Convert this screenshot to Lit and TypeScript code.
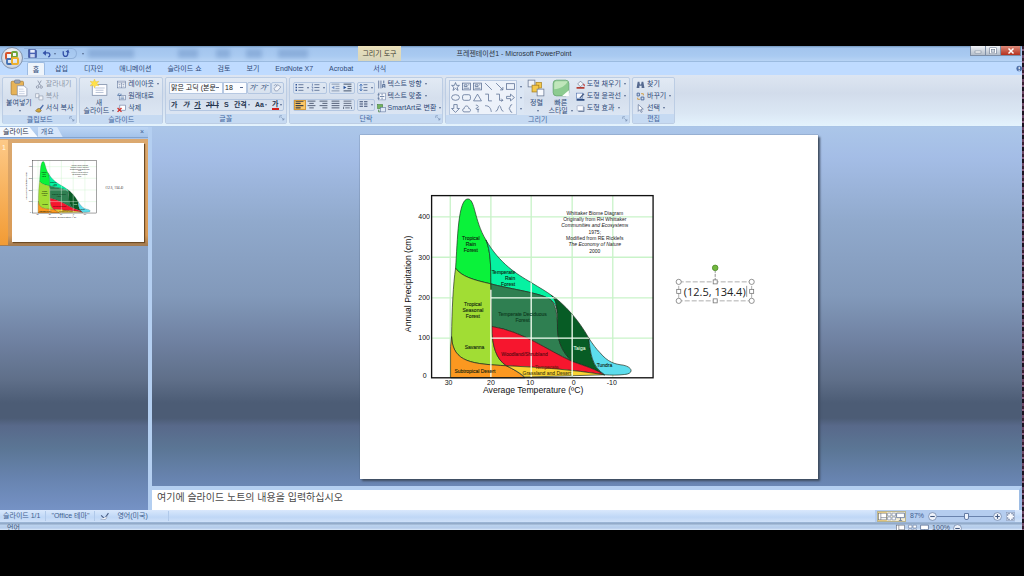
import { LitElement, html, svg, css } from "lit";
import { customElement, property } from "lit/decorators.js";
import { classMap } from "lit/directives/class-map.js";

const icons: Record<string, unknown> = {
  save: svg`<path d="M1 1h12l2 2v12H1z" fill="#4a62b4" stroke="#2b3f86"/><rect x="4" y="1.500" width="8" height="5" fill="#e8eefc"/><rect x="4" y="9" width="8" height="6" fill="#cdd8f2"/>`,
  undo: svg`<path d="M3 7h7a3.500 3.500 0 0 1 1 7" fill="none" stroke="#3552a8" stroke-width="2.400"/><path d="M1 7l6-5v10z" fill="#3552a8"/>`,
  redo: svg`<path d="M4 4v5a4 4 0 0 0 8 0V4" fill="none" stroke="#3552a8" stroke-width="2.400"/><path d="M8 5l5-4 2 6z" fill="#3552a8"/>`,
  paste: svg`<rect x="1" y="2" width="11" height="12" rx="1" fill="#e7b357" stroke="#a5762b" stroke-width=".6"/><rect x="4" y=".8" width="5" height="3" rx="1" fill="#9aa3b3" stroke="#6b7484" stroke-width=".5"/><path d="M6.500 6h6l2.500 2.500V15H6.500z" fill="#fbfcff" stroke="#7d8aa5" stroke-width=".6"/><path d="M8 9h4M8 11h5M8 13h5" stroke="#b5c0d6" stroke-width=".6"/>`,
  cut: svg`<path d="M5 1l5 9M11 1l-5 9" stroke="#8c96a8" stroke-width="1.500"/><circle cx="4.500" cy="12.500" r="2.200" fill="none" stroke="#8c96a8" stroke-width="1.500"/><circle cx="11" cy="12.500" r="2.200" fill="none" stroke="#8c96a8" stroke-width="1.500"/>`,
  copy: svg`<path d="M1 3h6v7H1zM7 7h7v7H7z" fill="#f0f2f7" stroke="#97a1b3" stroke-width="1.200"/>`,
  brush: svg`<path d="M8 8l6-7 1.500 1.500L10 10z" fill="#4d6dab"/><path d="M1 12c2-1 3-5 7-4l3 3c0 4-6 5-10 1z" fill="#d3a73e" stroke="#6f5520"/>`,
  newslide: svg`<rect x="2" y="5" width="13" height="9.500" fill="#fdfdff" stroke="#7e8ea9" stroke-width=".7"/><path d="M4 8h9M5 10h7M5 12h7" stroke="#a9b6cd" stroke-width=".7"/><path d="M4 0l1 2.500L8 2 6.200 4 8 6 5 5.800 4 8 3 5.800 0 6l1.800-2L0 2l3 .500z" fill="#ffe14a" stroke="#e0b52a" stroke-width=".3"/>`,
  layout: svg`<rect x="1" y="2" width="14" height="12" fill="#f7f9fd" stroke="#5b7097"/><path d="M1 5h14M8 5v9M3 8h3M3 11h3M10 8h3M10 11h3" stroke="#5b7097"/>`,
  reset: svg`<rect x="4" y="6" width="11" height="8" fill="#fff" stroke="#5b7097"/><path d="M1 6h6V3M1 6l3-4M6 9h7M6 12h7" fill="none" stroke="#41689f" stroke-width="1.300"/>`,
  del: svg`<rect x="5" y="2" width="10" height="9" fill="#fff" stroke="#5b7097"/><path d="M1 7l7 7M8 7l-7 7" stroke="#d0302b" stroke-width="2.400"/>`,
  eraser: svg`<path d="M2 10l6-7 6 4-6 7H4z" fill="#f1f4fa" stroke="#65789b"/><path d="M2 5c2-4 5-2 5 1" fill="none" stroke="#65789b"/>`,
  bullets: svg`<path d="M6 3h9M6 8h9M6 13h9" stroke="#4b6188" stroke-width="1.400"/><path d="M1 3h2.500M1 8h2.500M1 13h2.500" stroke="#2d4f91" stroke-width="2.500"/>`,
  numbers: svg`<path d="M6 3h9M6 8h9M6 13h9" stroke="#4b6188" stroke-width="1.400"/><path d="M2.500 1v4M1 7h2v3M1 12h2v3" stroke="#2d4f91" fill="none"/>`,
  outdent: svg`<path d="M1 2h14M8 6h7M8 10h7M1 14h14" stroke="#7384a2" stroke-width="1.400"/><path d="M6 5v6L1 8z" fill="#6d8dc4"/>`,
  indent: svg`<path d="M1 2h14M8 6h7M8 10h7M1 14h14" stroke="#33445f" stroke-width="1.600"/><path d="M1 5v6l5-3z" fill="#24509c"/>`,
  spacing: svg`<path d="M8 3h7M8 8h7M8 13h7" stroke="#4b6188" stroke-width="1.400"/><path d="M3.500 2v12M1 5l2.500-3L6 5M1 11l2.500 3L6 11" fill="none" stroke="#2d62b1" stroke-width="1.300"/>`,
  left: svg`<path d="M1 2h14M1 6h9M1 10h14M1 14h9" stroke="#3d4048" stroke-width="1.800"/>`,
  center: svg`<path d="M1 2h14M4 6h8M1 10h14M4 14h8" stroke="#47536b" stroke-width="1.600"/>`,
  right: svg`<path d="M1 2h14M6 6h9M1 10h14M6 14h9" stroke="#47536b" stroke-width="1.600"/>`,
  justify: svg`<path d="M1 2h14M1 6h14M1 10h14M1 14h14" stroke="#47536b" stroke-width="1.600"/>`,
  distribute: svg`<path d="M1 2h14M1 6h14M1 10h14M4 14h8M1 12v4M15 12v4" stroke="#47536b" stroke-width="1.400"/>`,
  columns: svg`<path d="M1 3h6M1 7h6M1 11h6M9 3h6M9 7h6M9 11h6" stroke="#3c4e72" stroke-width="2"/>`,
  textdir: svg`<path d="M3 1v14M7 1v14" stroke="#5b7097" stroke-width="1.500"/><path d="M10 14V8h4v6M10 11h4M12 6V1" fill="none" stroke="#33507f" stroke-width="1.300"/>`,
  textalign: svg`<rect x="3" y="2" width="12" height="12" fill="#f6f8fd" stroke="#6a7fa5"/><path d="M5 8h8M9 3v3M9 10v3M1 5h4M1 11h4" stroke="#33507f" stroke-width="1.200"/>`,
  smartart: svg`<rect x="1" y="1" width="9" height="7" fill="#73b35e" stroke="#3f7a36"/><rect x="6" y="6" width="9" height="8" fill="#dfe9f8" stroke="#5b7097"/><path d="M3 10v4h2" fill="none" stroke="#3f7a36" stroke-width="1.500"/>`,
  arrange: svg`<rect x="1" y="1" width="6" height="6" fill="#eef2f9" stroke="#6d7c98" stroke-width=".7"/><rect x="8" y="3" width="5" height="5" fill="#f4c84b" stroke="#a67f23" stroke-width=".6"/><rect x="4.500" y="5.500" width="6" height="6" fill="#f4c84b" stroke="#a67f23" stroke-width=".7"/><rect x="9" y="9" width="6" height="6" fill="#f7f9fd" stroke="#6d7c98" stroke-width=".7"/>`,
  quick: svg`<rect x="1" y="1" width="14" height="14" rx="3" fill="#8ccb90" stroke="#5d9d68" stroke-width=".6"/><path d="M2 9C7 9 12 6 14 2H4a2 2 0 0 0-2 2z" fill="#c0e6bb"/><path d="M9 15l6-5v5z" fill="#fff"/>`,
  fill: svg`<path d="M3 7l5-5 5 5-5 5z" fill="#f3f5fa" stroke="#55637f"/><path d="M13 7c2 1 2 3 1 4" stroke="#c02d27" fill="none" stroke-width="2"/><rect x="1" y="12.500" width="14" height="3" fill="#b3382e"/>`,
  outline: svg`<rect x="1" y="2" width="11" height="9" fill="#f6f8fd" stroke="#4569a9"/><path d="M6 10l7-8 2 2-7 7z" fill="#4a5e85"/><rect x="1" y="12.500" width="14" height="3" fill="#28477e"/>`,
  effects: svg`<rect x="4" y="5" width="11" height="9" rx="1" fill="#7284a4"/><rect x="2" y="3" width="11" height="9" rx="1" fill="#fafbff" stroke="#8b9ab5"/>`,
  find: svg`<path d="M1 14l2-11h3l1 5h2l1-5h3l2 11h-5v-4H6v4z" fill="#55698f"/>`,
  replace: svg`<path d="M2 2h4v5H2zM9 9h5v5H9z" fill="none" stroke="#3c5c93" stroke-width="1.500"/><path d="M9 3h4v3M3 10v3h4" fill="none" stroke="#d0932f" stroke-width="1.500"/>`,
  select: svg`<path d="M4 1v12l3-3 2 5 2-1-2-5h4z" fill="#fff" stroke="#5b6f94" stroke-width="1.200"/>`,
  star: svg`<path d="M8 1l2 5h5l-4 3.500L12.500 15 8 11.500 3.500 15 5 9.500 1 6h5z"/>`,
  pic: svg`<rect x="1" y="2" width="14" height="12"/><path d="M4 5h5v3H4zM3 11h10M11 5h2"/>`,
  line: svg`<path d="M2 2l12 12"/>`,
  arrow: svg`<path d="M2 2l12 12M14 9v5H9"/>`,
  rect: svg`<rect x="1" y="3" width="14" height="10"/>`,
  oval: svg`<ellipse cx="8" cy="8" rx="7" ry="5"/>`,
  round: svg`<rect x="1" y="3" width="14" height="10" rx="3"/>`,
  tri: svg`<path d="M8 2l7 12H1z"/>`,
  elbow: svg`<path d="M2 2h6v12h6"/>`,
  elbow2: svg`<path d="M2 2h6v11h6M11 10l3 3-3 2"/>`,
  block: svg`<path d="M1 6h7V2l7 6-7 6v-4H1z"/>`,
  down: svg`<path d="M5 1h6v7h4l-7 7-7-7h4z"/>`,
  cloud: svg`<path d="M3 14C0 12 1 8 4 8c0-6 8-6 8 0 4 0 4 5 1 6z"/>`,
  bolt: svg`<path d="M5 2c5 0 6 4 2 5s0 4 4 2M9 9v6"/>`,
  curve: svg`<path d="M2 3c8 0 10 5 11 11"/>`,
  peak: svg`<path d="M1 13C6 13 5 3 8 3s2 10 7 10"/>`,
  brace: svg`<path d="M11 1C6 1 9 7 5 8c4 1 1 7 6 7"/>`,
  launch: svg`<path d="M2 8V2h6M6 6l7 7M13 8v5H8" fill="none" stroke="#6f86ab" stroke-width="1.500"/>`,
  proof: svg`<path d="M2 6l6 6 7-10" fill="none" stroke="#4a5f87" stroke-width="2"/><path d="M1 13h9l3-5" fill="#fff" stroke="#7d8ba5"/>`,
  normal: svg`<rect x="1" y="2" width="14" height="12" fill="#fff" stroke="#5b6270"/><path d="M5 2v12M5 10h10" stroke="#5b6270"/>`,
  sorter: svg`<path d="M1 2h6v5H1zM9 2h6v5H9zM1 9h6v5H1zM9 9h6v5H9z" fill="#fff" stroke="#64789c"/>`,
  show: svg`<path d="M1 2h14v8H1z" fill="#fff" stroke="#5b6f94" stroke-width="1.400"/><path d="M8 10v5M5 15h6" stroke="#5b6f94" stroke-width="1.400"/>`,
  minus: svg`<circle cx="8" cy="8" r="7" fill="#f1f5fc" stroke="#6e83a8" stroke-width="1.400"/><path d="M4 8h8" stroke="#42587f" stroke-width="2"/>`,
  plus: svg`<circle cx="8" cy="8" r="7" fill="#f1f5fc" stroke="#6e83a8" stroke-width="1.400"/><path d="M4 8h8M8 4v8" stroke="#42587f" stroke-width="2"/>`,
  fit: svg`<rect x="1" y="1" width="14" height="14" fill="#f7f9fd" stroke="#8394b3"/><path d="M3 7V3h4M13 9v4H9M9 3h4v4M7 13H3V9" fill="none" stroke="#5a7099" stroke-width="1.400"/>`,
};

const icon = (name: string, cls = "ico") =>
  html`<svg class=${cls} viewBox="0 0 16 16" aria-hidden="true">${icons[name]}</svg>`;

@customElement("biome-slide")
class BiomeSlide extends LitElement {
  @property({ type: Boolean }) editing = false;

  static styles = css`
    :host { display: block; background: #fff; }
    .art { display: block; width: 100%; height: auto; font-family: "Liberation Sans", Arial, sans-serif; }
    .box { font-family: "Open Sans", sans-serif; }
  `;

  label(x: number, y: number, lines: string[], fill = "#10240f", anchor = "middle") {
    return svg`<text font-size="15" fill=${fill} stroke=${fill} stroke-width=".3" text-anchor=${anchor}>${lines.map(
      (t, i) => svg`<tspan x=${x} y=${y + i * 18}>${t}</tspan>`)}</text>`;
  }

  render() {
    const notes = ["Whittaker Biome Diagram", "Originally from RH Whittaker", "Communities and Ecosystems",
      "1975;", "Modified from RE Ricklefs", "The Economy of Nature", "2000"];
    return html`<svg class="art" viewBox="0 0 458 344" role="img" aria-label="Whittaker Biome Diagram">
      <defs><clipPath id="biomes"><path d="M182 594V500C186 400 190 300 197 265C203 180 204 57 234 57C256 57 252 120 300 200C335 252 380 282 424 308C450 324 470 335 485 347C520 368 565 420 594 470C610 495 620 508 630 518C655 548 675 553 700 556C730 562 732 582 705 584C680 587 640 585 600 588L405 592z"/></clipPath></defs>
      <g transform="translate(30 45) scale(.33333)">
        <path d="M181 47V594M303 47V594M424 47V594M547 47V594M669 47V594M125 111H790M125 232H790M125 354H790M125 475H790" stroke="#c9f3c9" stroke-width="4"/>
        <g stroke="#1b2a1b" stroke-width="2" stroke-linejoin="round">
          <path fill="#0af23a" d="M197 265C203 180 204 57 234 57C256 57 252 120 288 180C302 210 303 260 303 312C250 300 215 290 197 265z"/>
          <path fill="#a1dd34" d="M197 265C215 290 250 300 303 312L306 440C306 500 320 540 350 558C250 552 188 550 185 470C186 390 190 310 197 265z"/>
          <path fill="#fb9820" d="M185 470C188 550 250 552 350 558C375 570 392 582 405 594H182V500z"/>
          <path fill="#06f2a2" d="M288 180C330 252 380 282 424 308C450 324 470 335 487 348C500 365 503 385 503 400C500 370 485 360 470 353C440 338 350 325 303 312C303 260 302 210 288 180z"/>
          <path fill="#2f7f51" d="M303 312C350 325 440 338 470 353C495 362 503 390 503 450C505 490 520 520 547 545C470 510 400 455 306 440z"/>
          <path fill="#075c25" d="M485 347C520 368 568 422 597 475C602 520 605 560 645 585C600 560 565 552 547 545C520 520 505 490 503 450C503 400 505 365 485 347z"/>
          <path fill="#f6162e" d="M306 440C400 455 470 510 547 545C590 560 620 570 645 585C550 570 450 562 350 558C320 540 306 500 306 440z"/>
          <path fill="#fad334" d="M350 558C450 562 550 570 645 585L405 592C392 580 370 568 350 558z"/>
          <path fill="#5cdded" d="M597 475C610 495 620 508 630 518C655 548 675 553 700 556C730 562 732 582 705 584C680 587 665 586 645 585C605 560 602 520 597 475z"/>
        </g>
        <path clip-path="url(#biomes)" d="M303 330V594M424 300V594M547 400V594M303 354H600M303 475H640" stroke="#f2fff2" stroke-width="4"/>
        <rect x="125" y="47" width="665" height="547" fill="none" stroke="#111" stroke-width="4"/>
        ${this.label(243, 181, ["Tropical", "Rain", "Forest"])}
        ${this.label(249, 379, ["Tropical", "Seasonal", "Forest"])}
        ${this.label(254, 508, ["Savanna"])}
        ${this.label(255, 579, ["Subtropical Desert"])}
        ${this.label(376, 281, ["Temperate", "Rain", "Forest"], "#10240f", "end")}
        ${this.label(398, 408, ["Temperate Deciduous", "Forest"], "#0d3a1e")}
        ${this.label(404, 528, ["Woodland/Shrubland"], "#5a0a12")}
        ${this.label(471, 568, ["Temperate"], "#7a1c10")}
        ${this.label(471, 586, ["Grassland and Desert"], "#4d4010")}
        ${this.label(569, 510, ["Taiga"], "#d6efd9")}
        ${this.label(644, 562, ["Tundra"])}
        <g font-size="15" text-anchor="middle" fill="#222">${notes.map((t, i) =>
          svg`<text x="615" y=${104 + i * 19} font-style=${i === 2 || i === 5 ? "italic" : "normal"}>${t}</text>`)}</g>
        <g font-size="21" fill="#111" text-anchor="end">
          <text x="120" y="117">400</text><text x="120" y="239">300</text><text x="120" y="361">200</text><text x="120" y="480">100</text><text x="110" y="595">0</text>
        </g>
        <g font-size="21" fill="#111" text-anchor="middle">
          <text x="176" y="616">30</text><text x="303" y="616">20</text><text x="421" y="616">10</text><text x="552" y="616">0</text><text x="666" y="616">-10</text>
        </g>
        <text x="430" y="641" font-size="26" text-anchor="middle" fill="#111">Average Temperature (ºC)</text>
        <text transform="translate(62 312) rotate(-90)" font-size="26" text-anchor="middle" fill="#111">Annual Precipitation (cm)</text>
      </g>
      <text class="box" x="324" y="161" font-size="11" fill="#222">(12.5, 134.4)</text>
      ${this.editing ? svg`
        <g fill="#fff" stroke="#777" stroke-width=".8">
          <rect x="319" y="147" width="73" height="19" fill="none" stroke="#999" stroke-dasharray="5 2"/>
          <path d="M355.500 146v-10" stroke-dasharray="3 1"/>
          <circle cx="355.500" cy="133" r="2.800" fill="#72b83e" stroke="#4c8a2a"/>
          <circle cx="319" cy="147" r="2.600"/><circle cx="392" cy="147" r="2.600"/><circle cx="319" cy="166" r="2.600"/><circle cx="392" cy="166" r="2.600"/>
          <rect x="353.500" y="145" width="4" height="4"/><rect x="353.500" y="164" width="4" height="4"/><rect x="317" y="154.500" width="4" height="4"/><rect x="390" y="154.500" width="4" height="4"/>
        </g>
        <path d="M387 151v11" stroke="#555" stroke-width=".6"/>` : ""}
    </svg>`;
  }
}

@customElement("app-root")
class AppRoot extends LitElement {
  static styles = css`
    :host {
      display: grid; min-height: 100vh; box-sizing: border-box; padding-block: 46px; background: #000;
      font: 7px/10px "Liberation Sans", "Noto Sans CJK KR", sans-serif; color: #2f4a78;
    }
    button, select, input, textarea { font: inherit; color: inherit; margin: 0; padding: 0; border: 0; background: none; box-sizing: border-box; }
    button { display: inline-flex; align-items: center; justify-content: center; white-space: nowrap; }
    .ico { width: 9px; height: 9px; flex: none; display: block; }
    .big { width: 18px; height: 18px; flex: none; }
    .caret::after { content: ""; display: inline-block; border: 1px solid transparent; border-top: 2px solid #55698f; border-bottom: 0; margin-left: 3px; vertical-align: middle; }
    .window {
      display: grid; grid-template-rows: 16px 13px 52px 1fr 12px 8px; padding-right: 2px; min-width: 0; position: relative;
      background: repeating-linear-gradient(#3a2033 0 3px, #8a6080 3px 5px, #1c1220 5px 9px, #6d4766 9px 12px);
    }
    .titlebar { display: grid; grid-template-columns: 1fr auto 1fr; background: linear-gradient(#6f93bb, #a3c5ee 2px, #a9caf1 10px, #b8d4f5); border-bottom: 1px solid #9bbbe0; box-sizing: border-box; }
    .lead { display: flex; padding-left: 24px; }
    .qat { display: flex; align-items: center; gap: 5px; padding: 0 6px 0 4px; margin-block: 2px; border: 1px solid #8fb0da; border-left: 0; border-radius: 0 7px 7px 0; }
    .more { display: flex; align-items: center; padding-left: 2px; }
    .glass { flex: 1; margin: 3px 14px 3px 4px; filter: blur(2px); opacity: .35;
      background: linear-gradient(90deg, #587fb5 0 46px, transparent 46px 90px, #587fb5 90px 110px, transparent 110px 128px, #587fb5 128px 142px, transparent 142px 158px, #587fb5 158px 174px, transparent 174px 190px, #587fb5 190px 220px, transparent 220px); }
    .context { padding: 3px 4px 0; margin-right: 50px; background: linear-gradient(#e9dfb9, #d8d6bd); color: #3b3b33; box-sizing: border-box; }
    .title { font: inherit; margin: 0; padding: 3px 0 0 6px; color: #2b3440; }
    .caption { justify-self: end; display: flex; height: 10px; margin-right: 1px; border: 1px solid #7d8ea6; border-top: 0; box-sizing: border-box; }
    .caption button { width: 15px; background: linear-gradient(#eef1f5, #b3bdca); border-right: 1px solid #7d8ea6; color: #fff; }
    .caption .close { width: 19px; border: 0; background: linear-gradient(#dc8b7b, #b5301d); font-weight: bold; }
    .caption svg { width: 8px; height: 8px; }
    .office { position: absolute; left: 1px; top: 1px; width: 22px; height: 22px; border-radius: 50%; border: 1px solid #8494ad; background: radial-gradient(circle at 50% 35%, #fff, #cdd6e3 70%, #a5b2c6); }
    .office svg { width: 16px; height: 16px; }
    .tabs { display: flex; background: #bfdbff; padding-left: 27px; }
    .tabs button { padding: 0 8px; line-height: 13px; }
    .tabs .home { width: 18px; padding: 0; margin-right: 2px; background: #eef4fb; border: 1px solid #9dbbe2; border-bottom: 0; border-radius: 2px 2px 0 0; }
    .tabs .tool { margin-left: 4px; }
    .tabs .help { margin-left: auto; padding: 0; }
    .ribbon { display: flex; gap: 2px; padding: 2px; box-sizing: border-box; background: linear-gradient(#dde5f1, #d2dceb 35%, #dbe7f4 75%, #e4f3fd); border-bottom: 1px solid #a9c4e6; }
    .group { display: grid; grid-template-rows: 1fr 9px; border: 1px solid #bccde4; border-radius: 2px; box-sizing: border-box; background: linear-gradient(#e2eaf4, #d5dfed 45%, #dfe9f6); }
    .group h2 { position: relative; margin: 0; font: inherit; line-height: 9px; text-align: center; background: #c6daf2; color: #4467a0; }
    .launch { position: absolute; right: 1px; top: 1px; }
    .launch svg { width: 6px; height: 6px; }
    .body { display: flex; padding: 0 3px; gap: 3px; }
    .tall { flex-direction: column; justify-content: flex-start; line-height: 8px; padding-top: 1px; gap: 2px; }
    .stack { display: grid; grid-template-rows: repeat(3, 12px); justify-items: start; }
    .stack button { gap: 2px; }
    .off { color: #8d97a8; }
    .rows { display: grid; grid-template-rows: 13px 13px; row-gap: 4px; padding-top: 3px; align-content: start; }
    .row { display: flex; align-items: center; }
    .row > button { height: 13px; }
    .combo { appearance: none; height: 12px; background: #fafcff; border: 1px solid #b6c8e2; padding-left: 1px; line-height: 10px; color: #222; border-radius: 0;
      background-image: linear-gradient(#55698f, #55698f); background-size: 3px 1px; background-repeat: no-repeat; background-position: right 3px center; }
    .face { width: 54px; } .size { width: 24px; }
    .seg { display: flex; border: 1px solid #b3c6e1; border-radius: 2px; height: 12px; box-sizing: border-box; }
    .seg button { padding: 0 1px; }
    .fonts .body { padding-right: 2px; }
    .fmt { display: flex; justify-content: space-between; flex: 1; color: #27364f; font-weight: bold; }
    .fmt .caret::after { margin-left: 1px; }
    .i { font-style: italic; } .u { text-decoration: underline; } .s { text-decoration: line-through; }
    .ink { border-bottom: 2px solid #d5201b; line-height: 8px; }
    .para .seg button { width: 12px; padding: 0; }
    .para .seg .wide { width: 16px; }
    .para .row { gap: 2px; }
    .para .body { gap: 2px; padding-right: 1px; }
    .para .seg .on { background: #fbc767; outline: 1px solid #d39a3c; outline-offset: -1px; }
    .shapes { display: grid; grid-template-columns: repeat(6, 11px); grid-template-rows: repeat(3, 11px); background: #edf2fa; border: 1px solid #b9cae2; margin-top: 2px; height: 33px; }
    .shapes svg { width: 9px; height: 9px; fill: none; stroke: #5d7195; stroke-width: 1.400; }
    .gallery { display: flex; }
    .scroll { display: grid; grid-template-rows: repeat(3, 11px); margin-top: 3px; width: 7px; background: #dbe6f4; }
    .scroll .caret::after { margin-left: 0; }
    .work { display: grid; grid-template-columns: 148px 1fr; min-height: 0;
      background: linear-gradient(#abc6e9, #a4bde6 8%, #90a9cc 25%, #8299ba 44%, #6f81a1 56%, #5f6f89 66%, #4c5c75 72% 76%, #58698a 78%, #5b7695 84%, #6884b0 92%, #7592c5); }
    .pane-tabs { display: flex; height: 11px; background: linear-gradient(#bcd5f4, #a4c3ea); border-bottom: 1px solid #83a4cf; box-sizing: border-box; }
    .pane-tabs button { padding: 0 9px 0 3px; clip-path: polygon(0 0, 78% 0, 100% 100%, 0 100%); background: #d6e6fa; color: #40618f; }
    .pane-tabs .front { background: #f6faff; color: #1c2c45; }
    .pane-tabs .x { margin-left: auto; clip-path: none; background: none; padding: 0 4px; }
    .picked { display: grid; grid-template-columns: 8px 1fr; gap: 4px; margin-top: 1px; padding: 4px 4px 4px 0; background: linear-gradient(#dba970, #d99a55 90%, #a07a52); }
    .num { background: linear-gradient(#fdc987, #f29b34); color: #fffbe8; text-align: center; margin-block: -3px; padding-top: 3px; }
    .thumb { box-shadow: 1px 1px 1px #6b4a25; }
    .main { display: grid; grid-template-rows: 1fr auto; border-left: 4px solid #b4cff1; min-width: 0; }
    .stage { display: flex; justify-content: center; align-items: flex-start; padding: 8px 0 6px; }
    .slide { width: 52.6%; flex: none; margin-left: 4px; box-shadow: 2px 2px 2px #3f4d60, 0 0 1px #44526a; }
    .notes { display: block; width: 100%; height: 24px; resize: none; overflow: hidden; border-top: 4px solid #b4cff1; border-right: 3px solid #9dbce4; background: #fff; font-size: 10px; line-height: 15px; padding-left: 5px; outline: 0; }
    .notes::placeholder { color: #4a4a4a; opacity: 1; }
    .status { display: flex; align-items: center; padding: 0 7px 0 3px; background: linear-gradient(#d9e8fc, #bfd7f6 60%, #cfe1f9); color: #41608f; }
    .status > span { padding-right: 5px; margin-right: 5px; border-right: 1px solid #b0c9ea; }
    .status > .lang { padding-inline: 8px 20px; }
    .zoom { margin-left: auto; display: flex; align-items: center; align-self: stretch; gap: 4px; background: #b5cdef; padding-left: 2px; }
    .views { display: flex; background: #f4eed6; border: 1px solid #b9b48f; }
    .views button { width: 9px; } .views .on { background: #fbd987; }
    .slider { display: flex; align-items: center; }
    .slider input { appearance: none; width: 56px; height: 9px; background: linear-gradient(#6a83ad, #6a83ad) center / 100% 1px no-repeat; }
    .slider input::-webkit-slider-thumb { appearance: none; width: 5px; height: 7px; background: #eff4fc; border: 1px solid #667da5; border-radius: 0 0 2px 2px; }
    .behind { display: flex; overflow: hidden; height: 8px; box-sizing: border-box; padding: 2px 60px 0 7px; background: linear-gradient(#9fb9da, #8fa6c4 2px, #bcd3ee 3px, #b4cbea 6px, #dceafa); color: #44577a; line-height: 8px; }
    .peek { margin-left: auto; display: flex; gap: 3px; }
  `;

  tall(name: string, lines: string[], alone = false) {
    return html`<button class="tall">${icon(name, "big")}<span>${lines.map((l, i) =>
      html`${i ? html`<br>` : ""}<span class=${classMap({ caret: !alone && i === lines.length - 1 })}>${l}</span>`)}</span></button>`;
  }

  stack(items: [string, string, string?][]) {
    return html`<div class="stack">${items.map(([n, t, c]) =>
      html`<button class=${c === "off" ? "off" : ""}>${icon(n)}<span class=${c === "menu" ? "caret" : ""}>${t}</span></button>`)}</div>`;
  }

  group(cls: string, title: string, body: unknown, launch = true) {
    return html`<section class="group ${cls}"><div class="body">${body}</div><h2>${title}${launch
      ? html`<button class="launch" aria-label="${title} 대화 상자">${icon("launch")}</button>` : ""}</h2></section>`;
  }

  render() {
    const shapes = ["star", "pic", "pic", "line", "arrow", "rect", "oval", "round", "tri", "elbow", "elbow2", "block", "down", "cloud", "bolt", "curve", "peak", "brace"];
    return html`<div class="window">
      <header class="titlebar">
        <div class="lead">
          <div class="qat">
            <button aria-label="저장">${icon("save")}</button>
            <button class="caret" aria-label="실행 취소">${icon("undo")}</button>
            <button aria-label="다시 실행">${icon("redo")}</button>
          </div>
          <button class="more caret" aria-label="도구 모음 사용자 지정"></button>
          <div class="glass"></div>
          <div class="context">그리기 도구</div>
        </div>
        <h1 class="title">프레젠테이션1 - Microsoft PowerPoint</h1>
        <div class="caption">
          <button aria-label="최소화"><svg viewBox="0 0 16 16"><rect x="2" y="8" width="12" height="4" fill="#fff" stroke="#68778d"/></svg></button>
          <button aria-label="최대화"><svg viewBox="0 0 16 16"><rect x="3" y="3" width="10" height="9" fill="none" stroke="#68778d" stroke-width="4"/><rect x="3" y="3" width="10" height="9" fill="none" stroke="#fff" stroke-width="2"/></svg></button>
          <button class="close" aria-label="닫기"><svg viewBox="0 0 16 16"><path d="M3 3l10 10M13 3L3 13" stroke="#fff" stroke-width="3"/></svg></button>
        </div>
      </header>
      <nav class="tabs">
        <button class="home">홈</button><button>삽입</button><button>디자인</button><button>애니메이션</button><button>슬라이드 쇼</button><button>검토</button><button>보기</button><button>EndNote X7</button><button>Acrobat</button><button class="tool">서식</button>
        <button class="help" aria-label="도움말"><svg class="ico" viewBox="0 0 16 16"><circle cx="11" cy="8" r="5" fill="#4c6da6"/><path d="M11 5v4M11 10v2" stroke="#fff" stroke-width="2"/></svg></button>
      </nav>
      <button class="office" aria-label="Office 단추"><svg viewBox="0 0 16 16"><rect x="2" y="3" width="6" height="6" rx="1" fill="none" stroke="#d8532b" stroke-width="2"/><rect x="8" y="2" width="5" height="5" rx="1" fill="none" stroke="#6fa53a" stroke-width="1.800"/><rect x="3" y="9" width="5" height="5" rx="1" fill="none" stroke="#3f6fb5" stroke-width="1.800"/><rect x="8" y="8" width="6" height="6" rx="1" fill="none" stroke="#edb02c" stroke-width="2"/></svg></button>
      <div class="ribbon">
        ${this.group("clip", "클립보드", html`${this.tall("paste", ["붙여넣기", ""])}${this.stack([["cut", "잘라내기", "off"], ["copy", "복사", "off"], ["brush", "서식 복사"]])}`)}
        ${this.group("slides", "슬라이드", html`${this.tall("newslide", ["새", "슬라이드"])}${this.stack([["layout", "레이아웃", "menu"], ["reset", "원래대로"], ["del", "삭제"]])}`, false)}
        ${this.group("fonts", "글꼴", html`<div class="rows">
          <div class="row">
            <select class="combo face" aria-label="글꼴"><option>맑은 고딕 (본문</option></select><select class="combo size" aria-label="글꼴 크기"><option>18</option></select>
            <div class="seg"><button class="i">가ˆ</button><button class="i">가ˇ</button></div><div class="seg"><button aria-label="서식 지우기">${icon("eraser")}</button></div>
          </div>
          <div class="row"><div class="seg fmt"><button>가</button><button class="i">가</button><button class="u">가</button><button class="s">가나</button><button>S</button><button class="caret">간격</button><button class="caret">Aa</button><button class="caret"><span class="ink">가</span></button></div></div>
        </div>`)}
        ${this.group("para", "단락", html`<div class="rows">
          <div class="row"><div class="seg"><button class="wide caret" aria-label="글머리 기호">${icon("bullets")}</button><button class="wide caret" aria-label="번호 매기기">${icon("numbers")}</button></div><div class="seg"><button aria-label="내어쓰기">${icon("outdent")}</button><button aria-label="들여쓰기">${icon("indent")}</button></div><div class="seg"><button class="wide caret" aria-label="줄 간격">${icon("spacing")}</button></div></div>
          <div class="row"><div class="seg">${["left", "center", "right", "justify", "distribute"].map((n) => html`<button class=${n === "left" ? "on" : ""} aria-label=${n}>${icon(n)}</button>`)}</div><div class="seg"><button class="wide caret" aria-label="열">${icon("columns")}</button></div></div>
        </div>${this.stack([["textdir", "텍스트 방향", "menu"], ["textalign", "텍스트 맞춤", "menu"], ["smartart", "SmartArt로 변환", "menu"]])}`)}
        ${this.group("draw", "그리기", html`<div class="gallery"><div class="shapes">${shapes.map((n) => html`<button aria-label=${n}>${icon(n)}</button>`)}</div><div class="scroll"><button class="caret" aria-label="위로"></button><button class="caret" aria-label="아래로"></button><button class="caret" aria-label="자세히"></button></div></div>
          ${this.tall("arrange", ["정렬", ""])}${this.tall("quick", ["빠른", "스타일"])}
          ${this.stack([["fill", "도형 채우기", "menu"], ["outline", "도형 윤곽선", "menu"], ["effects", "도형 효과", "menu"]])}`)}
        ${this.group("edit", "편집", this.stack([["find", "찾기"], ["replace", "바꾸기", "menu"], ["select", "선택", "menu"]]), false)}
      </div>
      <div class="work">
        <aside>
          <div class="pane-tabs"><button class="front">슬라이드</button><button>개요</button><button class="x" aria-label="닫기">×</button></div>
          <div class="picked"><div class="num">1</div><biome-slide class="thumb"></biome-slide></div>
        </aside>
        <main class="main">
          <div class="stage"><biome-slide class="slide" editing></biome-slide></div>
          <textarea class="notes" aria-label="슬라이드 노트" placeholder="여기에 슬라이드 노트의 내용을 입력하십시오"></textarea>
        </main>
      </div>
      <footer class="status">
        <span>슬라이드 1/1</span><span>"Office 테마"</span>${icon("proof")}<span class="lang">영어(미국)</span>
        <div class="zoom">
          <div class="views"><button class="on" aria-label="기본">${icon("normal")}</button><button aria-label="여러 슬라이드">${icon("sorter")}</button><button aria-label="슬라이드 쇼">${icon("show")}</button></div>
          <label for="zoom">87%</label>
          <div class="slider"><button aria-label="축소">${icon("minus")}</button><input id="zoom" type="range" min="0" max="100" value="52"><button aria-label="확대">${icon("plus")}</button></div>
          <button aria-label="창에 맞춤">${icon("fit")}</button>
        </div>
      </footer>
      <div class="behind"><span>언어</span><div class="peek">${icon("normal")}${icon("sorter")}${icon("show")}<span>100%</span>${icon("minus")}</div></div>
    </div>`;
  }
}
